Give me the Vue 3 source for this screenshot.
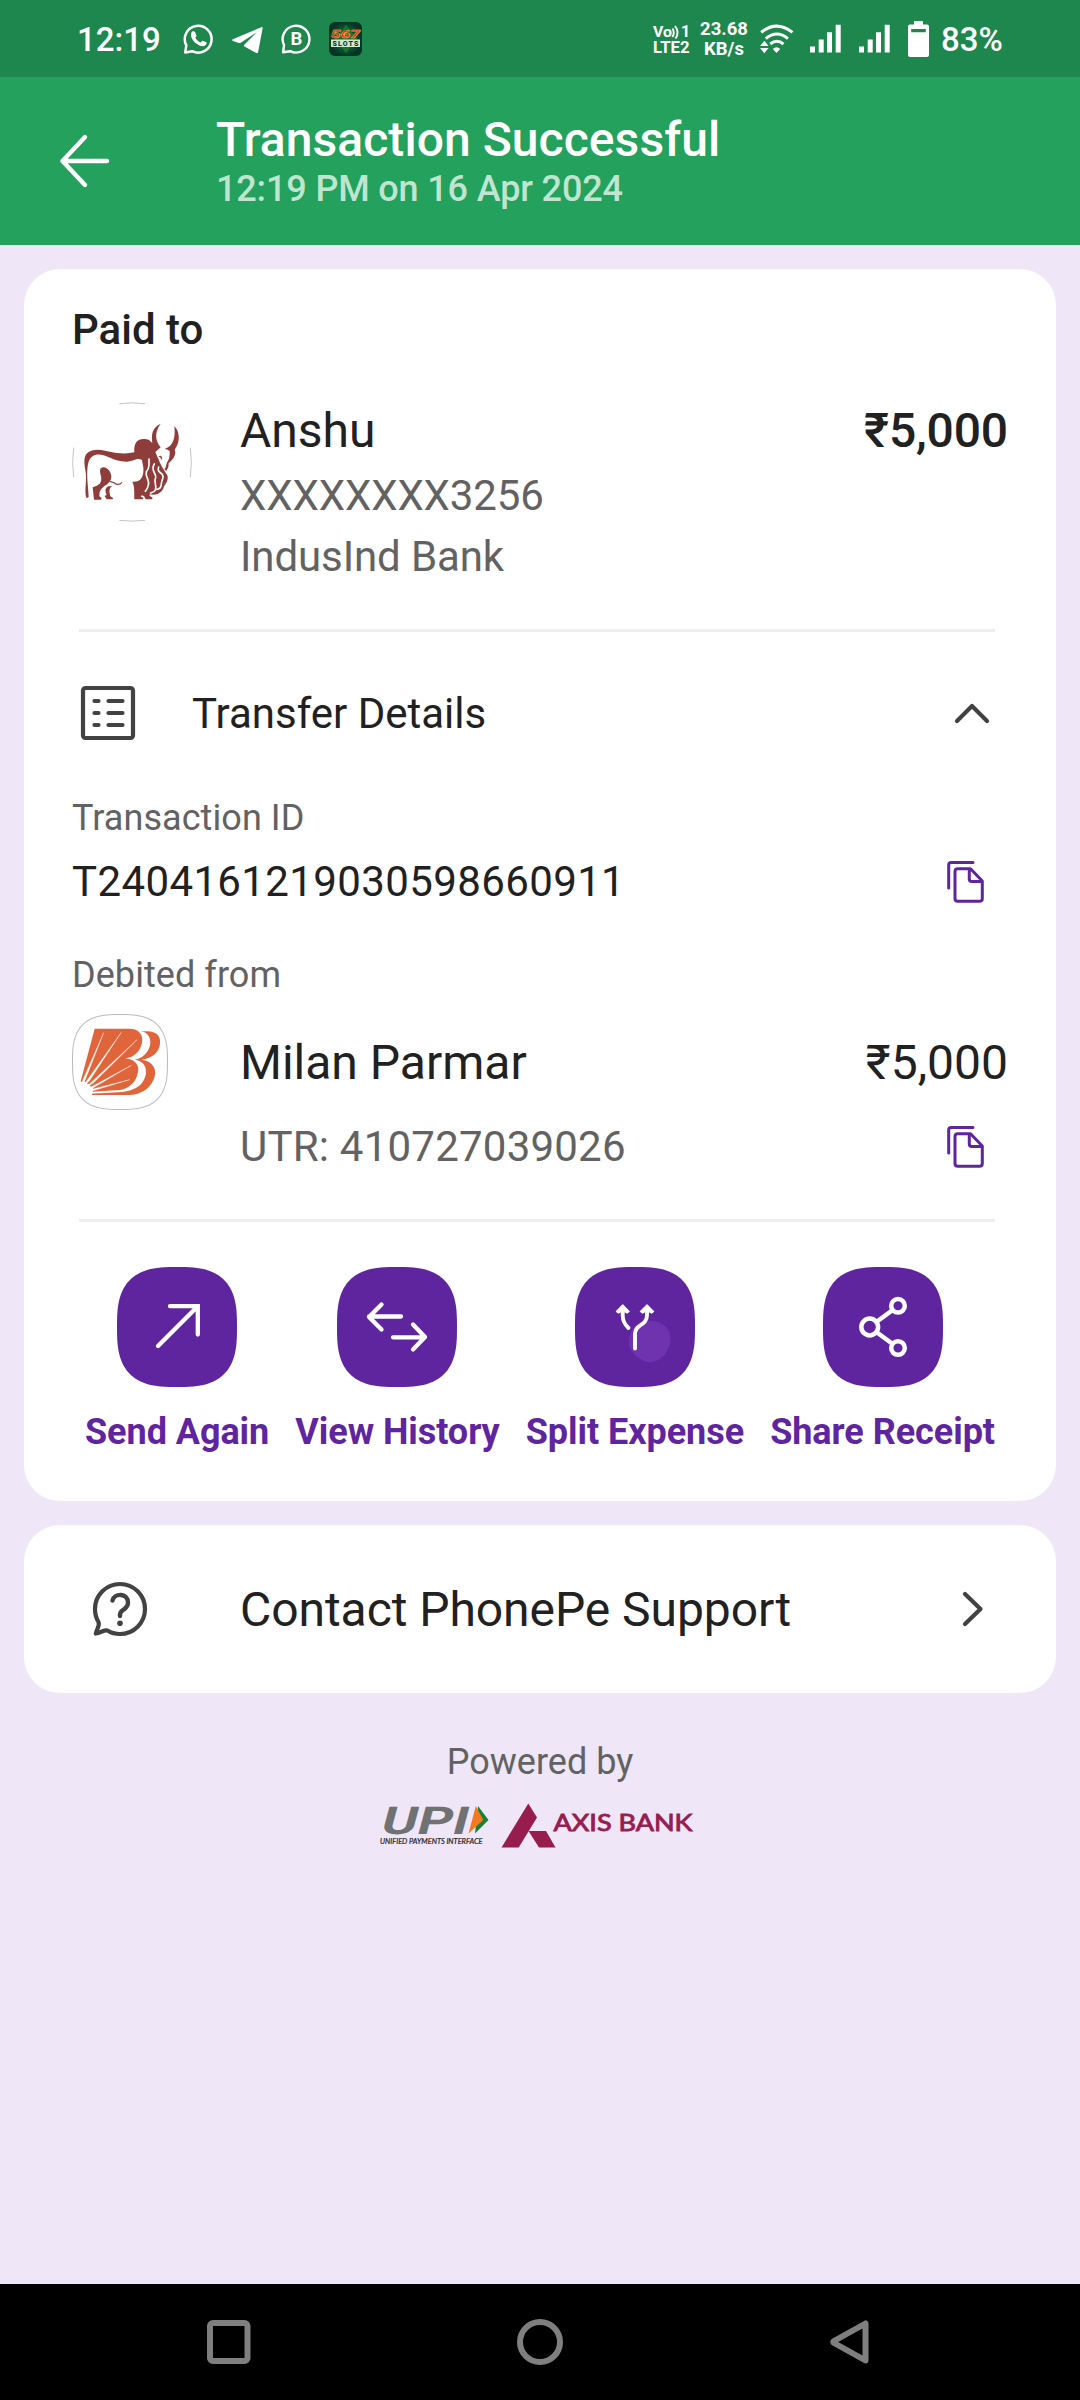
<script setup>
const squircle = (() => {
  const points = []
  for (let i = 0; i < 120; i++) {
    const a = (i / 120) * Math.PI * 2
    const c = Math.cos(a)
    const s = Math.sin(a)
    const x = 60 + 60 * Math.sign(c) * Math.pow(Math.abs(c), 0.7)
    const y = 60 + 60 * Math.sign(s) * Math.pow(Math.abs(s), 0.7)
    points.push(`${x.toFixed(2)} ${y.toFixed(2)}`)
  }
  return `M${points.join('L')}Z`
})()

const actions = [
  { id: 'send', label: 'Send Again' },
  { id: 'history', label: 'View History' },
  { id: 'split', label: 'Split Expense' },
  { id: 'share', label: 'Share Receipt' },
]
</script>

<template>
  <div class="screen">
    <div class="status">
      <span class="clock">12:19</span>
      <svg class="whatsapp" width="31" height="32" viewBox="0 0 31 32">
        <path d="M2.2 29.6 3.3 22.4A13.4 13.4 0 1 1 9.2 28.2Z" fill="none" stroke="#fff" stroke-width="2.500" stroke-linejoin="round" />
        <path d="M9.2 8.6C10 8 11.400 8 12 9L13.400 12.200C13.600 13 13.200 13.700 12.300 14.500C13.500 17 15.200 18.600 17.600 19.600L19.300 17.700C20 17.300 22.600 18.700 23.600 19.400C24 20.800 22.500 23 20 23.200C15 23.300 8.200 17.300 8 12.200C7.900 10.500 8.500 9.200 9.200 8.600Z" fill="#fff" />
      </svg>
      <svg class="telegram" width="31" height="28" viewBox="0 0 31 28">
        <path d="M.8 13.200 29.300 1.200C30.300.8 30.800 1.400 30.600 2.400L26.200 25.800C25.900 27.200 25 27.500 23.800 26.700L12.400 20.500C11.800 20 11.900 19.300 12.500 18.600L24.800 6.200 8.700 16.800C8.200 17.100 7.500 17.100 7 17L.9 14.900C-.1 14.400 0 13.600.8 13.200Z" fill="#fff" />
      </svg>
      <svg class="business" width="31" height="32" viewBox="0 0 31 32">
        <path d="M2.100 29.300 3 22A13.400 13.400 0 1 1 9.200 28.200Z" fill="none" stroke="#fff" stroke-width="2.400" stroke-linejoin="round" />
        <text x="15.500" y="22" text-anchor="middle" font-family="Roboto, sans-serif" font-weight="700" font-size="18.500" fill="#fff">B</text>
      </svg>
      <svg class="slots" width="33" height="34" viewBox="0 0 33 34">
        <defs>
          <radialGradient id="slotsBg">
            <stop offset="0" stop-color="#15906a" />
            <stop offset="1" stop-color="#063322" />
          </radialGradient>
        </defs>
        <rect width="33" height="34" rx="6" fill="url(#slotsBg)" />
        <path d="M17 2 29 17 17 32 5 17Z" fill="#19702a" stroke="#0a4423" />
        <rect x="2" y="17.500" width="29" height="7.500" fill="#cfe9cf" />
        <text x="16.500" y="15.800" text-anchor="middle" textLength="29" lengthAdjust="spacingAndGlyphs" font-family="Roboto, sans-serif" font-weight="900" font-style="italic" font-size="11.500" fill="#e62b20" stroke="#f5c24a" stroke-width=".4">567</text>
        <text x="16.500" y="24" text-anchor="middle" textLength="26" font-family="Roboto, sans-serif" font-weight="900" font-size="7" fill="#17382a">SLOTS</text>
      </svg>
      <span class="spacer"></span>
      <svg class="volte" width="37" height="30" viewBox="0 0 37 30">
        <g font-family="Roboto, sans-serif" font-weight="700" fill="#fff">
          <text x="0" y="13" font-size="14.500" textLength="19" lengthAdjust="spacingAndGlyphs">Vo</text>
          <text x="28" y="12.500" font-size="16">1</text>
          <text x="0" y="28.500" font-size="16.500" textLength="36.500" lengthAdjust="spacingAndGlyphs">LTE2</text>
        </g>
        <path d="M19.500 4.500Q22 8.500 19.500 13M22 2Q27 8.500 22.500 14.500" fill="none" stroke="#fff" stroke-width="1.900" />
      </svg>
      <span class="speed"><span>23.68</span><span>KB/s</span></span>
      <svg class="wifi" width="34" height="30" viewBox="0 0 34 30">
        <g fill="none" stroke="#fff" stroke-width="3">
          <path d="M1.200 8.400Q16.500-4.200 32.500 8.400" />
          <path d="M5.800 14.600Q16.800 5.400 27.900 14.600" />
          <path d="M10.300 20Q16.800 14.600 23.500 20" />
        </g>
        <path d="M12.800 25Q16.500 21.600 20.200 25L16.500 29ZM0 22 4.300 16.800 8.600 22ZM0 24 4.300 29.200 8.600 24Z" fill="#fff" />
      </svg>
      <svg v-for="n in 2" :key="n" class="signal" width="31" height="29" viewBox="0 0 31 29">
        <path d="M0 22.500H5V28.500H0ZM8.700 15.500H13.700V28.500H8.700ZM17 8.300H22V28.500H17ZM25.700.700H30.700V28.500H25.700Z" fill="#fff" />
      </svg>
      <svg class="battery" width="21" height="36" viewBox="0 0 21 36">
        <path fill-rule="evenodd" d="M6 0H15V3.500H19Q21 3.500 21 5.500V34Q21 36 19 36H2Q0 36 0 34V5.500Q0 3.500 2 3.500H6ZM3.200 8V11.200H17.800V8Z" fill="#fff" />
      </svg>
      <span class="percent">83%</span>
    </div>

    <header class="header">
      <svg width="50" height="54" viewBox="0 0 50 54">
        <path d="M26 3 3.500 27 26 51M3.500 27H48" fill="none" stroke="#fff" stroke-width="4.400" stroke-linejoin="round" stroke-linecap="round" />
      </svg>
      <div class="heading">
        <h1>Transaction Successful</h1>
        <p>12:19 PM on 16 Apr 2024</p>
      </div>
    </header>

    <main class="content">
      <section class="card">
        <h2>Paid to</h2>
        <div class="payee">
          <svg class="avatar" viewBox="36 36 360 360">
            <path d="M178 41Q216 36 255 41M178 391Q216 396 255 391M41 262Q35 216 41 173M391 173Q397 216 391 262" fill="none" stroke="#b5b5b5" stroke-width="2.400" />
            <g fill="#8f3d3b">
              <path d="M79 324C72 300 82 270 76 240C71 212 72 195 86 186C98 178 118 178 135 182C165 189 195 194 223 187C221 162 230 147 250 147C264 147 271 151 277 160C273 130 278 112 302 101C284 126 284 150 302 172L286 186C290 194 292 202 295 206C302 225 308 234 322 256C327 270 316 283 311 292C307 308 290 318 269 313L269 318L278 323L276 328H257L252 318L245 316L242 320L250 323L249 328H223C222 310 225 292 217 275C235 277 248 268 250 246C252 231 247 221 246 210C232 202 222 214 200 215C160 216 138 190 108 194C88 199 84 215 82 240C80 266 86 300 86 322Z" />
              <path d="M343 109C357 120 361 151 350 169C345 176 343 181 346 187C345 204 334 212 326 220C327 232 321 239 319 243C313 240 312 235 316 235L321 217C330 207 329 190 329 183C324 179 319 178 314 177C341 169 347 140 343 109Z" />
              <path d="M295 199 303 197 307 204 303 211 302 203Z" />
              <path d="M122 235C137 224 155 245 154 262C153 283 127 286 119 305L118 319 125 324 123 329H102L98 292C111 289 120 284 123 274C127 260 116 246 122 235Z" />
              <path d="M157 288C144 296 149 308 151 319L159 324 158 328H140L134 318 140 314C135 305 134 293 146 289Z" />
            </g>
            <path d="M267 207C266 220 271 232 259 245C255 260 270 272 265 285C264 294 259 300 256 304M283 222C270 242 290 249 287 263C279 276 292 283 286 300C283 307 276 308 272 309M296 231C293 240 294 244 306 252C315 263 304 269 304 282C304 292 298 297 291 298" fill="none" stroke="#fff" stroke-width="5" stroke-linecap="round" />
            <path d="M149 274 162 278Q176 289 186 277" fill="none" stroke="#8f3d3b" stroke-width="3.500" />
          </svg>
          <div class="payee-text">
            <div class="name">Anshu</div>
            <div class="account">XXXXXXXX3256</div>
            <div class="bank">IndusInd Bank</div>
          </div>
          <div class="amount strong">₹5,000</div>
        </div>
        <hr>
        <div class="details-head">
          <svg width="54" height="54" viewBox="0 0 54 54">
            <rect x="2" y="2" width="50" height="50" rx="2.500" fill="none" stroke="#424242" stroke-width="4.200" />
            <path d="M13.500 15H17.500M13.500 27H17.500M13.500 39H17.500M27.500 15H41.500M27.500 27H41.500M27.500 39H41.500" fill="none" stroke="#424242" stroke-width="4.200" stroke-linecap="round" />
          </svg>
          <span>Transfer Details</span>
          <svg width="36" height="22" viewBox="0 0 36 22">
            <path d="M3 19 18 4 33 19" fill="none" stroke="#424242" stroke-width="4.200" stroke-linecap="round" stroke-linejoin="round" />
          </svg>
        </div>
        <div class="label">Transaction ID</div>
        <div class="txn">
          <span>T2404161219030598660911</span>
          <svg class="copy" viewBox="0 0 37 42">
            <path d="M1.700 27V4Q1.700 1.500 4.200 1.500H26M10.800 7.700H23.500L35.300 20V37.500Q35.300 40.300 32.500 40.300H10.800Q8 40.300 8 37.500V10.500Q8 7.700 10.800 7.700ZM22.300 8V18Q22.300 20.500 24.800 20.500H35" fill="none" stroke="#5f259f" stroke-width="3" stroke-linecap="round" stroke-linejoin="round" />
          </svg>
        </div>
        <div class="label debited">Debited from</div>
        <div class="payer">
          <svg class="bob" viewBox="36 42 288 288">
            <path :d="squircle" transform="translate(37.500 43.500) scale(2.375)" fill="#fff" stroke="#bcbcbc" stroke-width="1.300" />
            <path d="M225 94H262C290 94 303 110 300 132C297 157 277 175 245 179C276 183 291 205 284 230C275 262 245 285 205 285H96V240Z" fill="#e0653a" />
            <path d="M205 84L250 95C273 103 277 132 263 153C251 170 239 177 224 179C250 182 262 201 257 226C250 256 223 273 186 276L96 281V240Z" fill="#fff" />
            <path d="M104 86H208C238 86 250 105 246 128C241 154 223 171 195 175C224 177 239 195 234 217C228 248 205 271 166 271L98 275 90 257 62 244Z" fill="#e0653a" />
            <path d="M60 246 72 243 87 253 99 264 96 282 60 282Z" fill="#fff" />
            <path d="M96 281.500H195L165 285H96Z" fill="#e0653a" />
            <path d="M65 248 131 98 72 249ZM75 250 184 97 82 252ZM85 255 231 119 90 259ZM92 262 214 196 95 266ZM95 268 209 239 96 273Z" fill="#fff" stroke="#fff" stroke-width="1" />
            <path d="M62 244 67 240 65 246ZM73 246 78 239 76 247ZM81 250 88 243 84 253ZM89 257 98 249 92 260Z" fill="#e0653a" />
          </svg>
          <div class="payer-text">
            <div class="payer-line"><span class="name">Milan Parmar</span><span class="amount">₹5,000</span></div>
            <div class="utr">
              <span>UTR: 410727039026</span>
              <svg class="copy" viewBox="0 0 37 42">
                <path d="M1.700 27V4Q1.700 1.500 4.200 1.500H26M10.800 7.700H23.500L35.300 20V37.500Q35.300 40.300 32.500 40.300H10.800Q8 40.300 8 37.500V10.500Q8 7.700 10.800 7.700ZM22.300 8V18Q22.300 20.500 24.800 20.500H35" fill="none" stroke="#5f259f" stroke-width="3" stroke-linecap="round" stroke-linejoin="round" />
              </svg>
            </div>
          </div>
        </div>
        <hr>
        <div class="actions">
          <div v-for="action in actions" :key="action.id" class="action">
            <svg width="120" height="120" viewBox="0 0 120 120">
              <path :d="squircle" fill="#5f259f" />
              <g fill="none" stroke="#fff" stroke-width="4.300" stroke-linecap="round">
                <path v-if="action.id === 'send'" d="M53 39.200H80.800V67.500M80 40 41 79" stroke-linejoin="miter" />
                <path v-else-if="action.id === 'history'" d="M44.500 37.500 32 50 44.500 62.500M32 49.500H64M76 57.500 88 70 76 82.500M56 70.300H88" stroke-linejoin="round" />
                <template v-else-if="action.id === 'split'">
                  <path d="M73 53.800C87 53.500 96 61 95.500 73C94 87 84 96 72 95.200C61 91 54 84 54 74C54 63 61 54 73 53.800Z" fill="#7033b0" stroke="none" />
                  <path d="M47.700 44V49Q48 56 53.500 61M72 44V48C72 59 60 57 60 67V81.500" stroke-width="3.900" />
                  <path d="M47.700 38 54 44.500 52 46 47.700 43.500 43.500 46 41.500 44.500ZM72 38 78.500 44.500 76.500 46 72 43.500 67.700 46 65.500 44.500Z" fill="#fff" stroke-width="1.400" stroke-linejoin="round" />
                </template>
                <g v-else stroke-width="4.500">
                  <circle cx="46.700" cy="60" r="8.400" />
                  <circle cx="75" cy="38.800" r="6.800" />
                  <circle cx="75" cy="81" r="6.800" />
                  <path d="M54 54.500 69 43.500M54 65.500 69 76.500" />
                </g>
              </g>
            </svg>
            <span>{{ action.label }}</span>
          </div>
        </div>
      </section>

      <section class="card support">
        <svg width="56" height="56" viewBox="0 0 56 56">
          <path d="M3.800 52.500C5 47.500 8 44.500 6.500 41C4 37 3 32.500 3 28A25 25 0 1 1 28 53C23.500 53 19 51.800 15.500 49.500C12 48.800 9 51.500 3.800 52.500Z" fill="none" stroke="#424242" stroke-width="4.200" stroke-linejoin="round" />
          <path d="M20.500 19.500C22.500 11.500 36 12 36 21.500C36 29.500 28 27.500 28 33.500V35" fill="none" stroke="#424242" stroke-width="4.400" stroke-linecap="round" />
          <circle cx="28" cy="42.200" r="2.800" fill="#424242" />
        </svg>
        <span>Contact PhonePe Support</span>
        <svg width="22" height="36" viewBox="0 0 22 36">
          <path d="M3 3 18.500 18 3 33" fill="none" stroke="#424242" stroke-width="4.200" stroke-linecap="round" stroke-linejoin="round" />
        </svg>
      </section>

      <footer class="powered">
        <div>Powered by</div>
        <svg width="316" height="46" viewBox="0 0 316 46">
          <text transform="translate(-1 30.700) skewX(-15)" textLength="87" lengthAdjust="spacingAndGlyphs" font-family="Roboto, sans-serif" font-weight="700" font-size="38.500" fill="#707173">UPI</text>
          <path d="M98 3 108.500 17 95 30.500Z" fill="#11843c" />
          <path d="M95.800 3 103.300 17 88.500 30.500Z" fill="#f47a20" />
          <text x="0" y="41" textLength="102.500" lengthAdjust="spacingAndGlyphs" font-family="Lato, sans-serif" font-weight="400" font-style="italic" font-size="7.800" fill="#222" stroke="#222" stroke-width=".2">UNIFIED PAYMENTS INTERFACE</text>
          <path d="M148.300 .5 157 14.500 138.700 44.500H121.500ZM148.500 28H166L175.500 44.500H159Z" fill="#971d4f" />
          <text x="173.500" y="28" textLength="139" lengthAdjust="spacingAndGlyphs" font-family="Lato, sans-serif" font-weight="400" font-size="23.500" fill="#971d4f" stroke="#971d4f" stroke-width=".9">AXIS BANK</text>
        </svg>
      </footer>
    </main>

    <nav class="nav">
      <svg width="44" height="44" viewBox="0 0 44 44"><rect x="3" y="3" width="37.500" height="38" rx="3" fill="none" stroke="#7f7f7f" stroke-width="6" /></svg>
      <svg width="46" height="46" viewBox="0 0 46 46"><circle cx="23" cy="23" r="20" fill="none" stroke="#7f7f7f" stroke-width="6" /></svg>
      <svg width="39" height="44" viewBox="0 0 39 44"><path d="M35.500 3.500V40.500L4 23Q2.500 22 4 21Z" fill="none" stroke="#7f7f7f" stroke-width="6" stroke-linejoin="round" /></svg>
    </nav>
  </div>
</template>

<style>
body { margin: 0; background: #efe6f7; }
</style>

<style scoped>
.screen {
  width: 1080px;
  height: 2400px;
  display: flex;
  flex-direction: column;
  background: #efe6f7;
  font-family: Roboto, "Noto Sans", sans-serif;
  color: #212121;
  overflow: hidden;
}
svg { display: block; flex: none; overflow: visible; }
.status {
  box-sizing: border-box;
  height: 77px;
  flex: none;
  display: flex;
  align-items: center;
  padding: 0 78px 0 77px;
  background: #1d874e;
  color: #fff;
  font-weight: 500;
  font-size: 33px;
}
.clock { width: 85px; margin-top: 2px; }
.percent { width: 61px; white-space: nowrap; margin-top: 2px; }
.whatsapp { margin-left: 21px; }
.telegram { margin-left: 18px; margin-top: 2px; }
.business { margin-left: 18px; }
.slots { margin-left: 17px; }
.spacer { flex: 1; }
.volte { margin-right: 9px; }
.speed {
  width: 50px;
  display: flex;
  flex-direction: column;
  align-items: center;
  font-size: 18.500px;
  font-weight: 700;
  line-height: 20px;
}
.wifi { margin-left: 11px; }
.signal { margin-left: 18px; }
.wifi + .signal { margin-left: 16px; }
.battery { margin: 0 12px 0 18px; }
.header {
  height: 168px;
  flex: none;
  display: flex;
  background: #23a15d;
  color: #fff;
}
.header > svg { margin: 57px 0 0 59px; }
.heading { margin: 35px 0 0 107px; }
h1, h2, p { margin: 0; font-weight: 500; }
h1 { font-size: 48px; line-height: 56px; letter-spacing: 0.06px; }
p { font-size: 36px; line-height: 42px; letter-spacing: -0.15px; color: #bfe5d0; }
.content { flex: 1; padding: 24px 24px 0; }
.card {
  box-sizing: border-box;
  background: #fff;
  border-radius: 36px;
  padding: 36px 48px 48px;
}
h2 { font-size: 42px; line-height: 50px; }
.payee { display: flex; margin-top: 47px; }
.avatar { width: 120px; height: 120px; }
.payee-text { flex: 1; margin: 1px 0 0 48px; font-size: 42px; line-height: 50px; color: #626262; letter-spacing: -0.1px; }
.name { font-size: 48px; line-height: 56px; color: #212121; letter-spacing: 0; }
.account { margin-top: 12px; }
.bank { margin-top: 11px; }
.amount { font-size: 48px; line-height: 56px; color: #212121; }
.payee .amount { margin-top: 1px; }
.strong { font-weight: 500; letter-spacing: -0.15px; }
hr { height: 3px; border: 0; background: #eee; margin: 47px 13px 0 7px; }
.details-head { display: flex; align-items: center; margin: 54px 18px 0 9px; font-size: 42px; line-height: 50px; }
.details-head span { flex: 1; margin: 2px 0 0 57px; }
.label { font-size: 36px; line-height: 42px; margin-top: 57px; color: #626262; letter-spacing: 0.07px; }
.txn, .utr { display: flex; align-items: center; justify-content: space-between; font-size: 42px; line-height: 50px; padding-right: 24px; }
.txn { margin-top: 18px; letter-spacing: 0.38px; }
.utr { margin-top: 31px; color: #626262; letter-spacing: 0.22px; }
.copy { width: 37px; height: 42px; }
.label.debited { margin-top: 47px; }
.payer { display: flex; margin-top: 18px; }
.bob { width: 96px; height: 96px; }
.payer-text { flex: 1; margin: 21px 0 0 72px; }
.payer-line { display: flex; justify-content: space-between; }
.actions { display: flex; justify-content: space-between; margin: 45px 13px 0 13px; }
.action { display: flex; flex-direction: column; align-items: center; gap: 24px; color: #5f259f; font-size: 36px; font-weight: 700; line-height: 42px; white-space: nowrap; letter-spacing: -0.05px; }
.support { margin-top: 24px; height: 168px; padding: 0 72px 0 68px; display: flex; align-items: center; font-size: 48px; letter-spacing: -0.06px; }
.support span { flex: 1; margin-left: 92px; }
.powered { display: flex; flex-direction: column; align-items: center; margin-top: 48px; font-size: 36px; line-height: 42px; color: #626262; }
.powered svg { margin: 20px 0 0 -4px; }
.nav { height: 116px; flex: none; box-sizing: border-box; padding: 0 211px 0 207px; display: flex; justify-content: space-between; align-items: center; background: #000; }
.nav svg:nth-child(2) { margin-right: 1px; }
</style>
